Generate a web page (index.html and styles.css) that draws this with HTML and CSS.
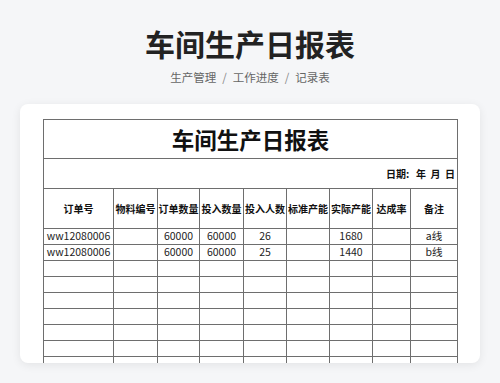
FILE: index.html
```html
<!DOCTYPE html>
<html lang="zh">
<head>
<meta charset="utf-8">
<link rel="stylesheet" href="styles.css">
</head>
<body>
<header class="page-head">
  <h1 class="page-title">车间生产日报表</h1>
  <nav class="crumbs"><span>生产管理</span><span class="sep">/</span><span>工作进度</span><span class="sep">/</span><span>记录表</span></nav>
</header>
<main class="card">
  <table class="sheet">
    <colgroup>
      <col class="c1"><col class="c2"><col class="c3"><col class="c4"><col class="c5"><col class="c6"><col class="c7"><col class="c8"><col class="c9">
    </colgroup>
    <tr class="r-title"><td colspan="9">车间生产日报表</td></tr>
    <tr class="r-date"><td colspan="9">日期:&nbsp;&nbsp;&nbsp;年&nbsp;&nbsp;月&nbsp;&nbsp;日</td></tr>
    <tr class="r-head"><th>订单号</th><th>物料编号</th><th>订单数量</th><th>投入数量</th><th>投入人数</th><th>标准产能</th><th>实际产能</th><th>达成率</th><th>备注</th></tr>
    <tr class="r-data"><td>ww12080006</td><td></td><td>60000</td><td>60000</td><td>26</td><td></td><td>1680</td><td></td><td>a线</td></tr>
    <tr class="r-data"><td>ww12080006</td><td></td><td>60000</td><td>60000</td><td>25</td><td></td><td>1440</td><td></td><td>b线</td></tr>
    <tr class="r-data"><td></td><td></td><td></td><td></td><td></td><td></td><td></td><td></td><td></td></tr>
    <tr class="r-data"><td></td><td></td><td></td><td></td><td></td><td></td><td></td><td></td><td></td></tr>
    <tr class="r-data"><td></td><td></td><td></td><td></td><td></td><td></td><td></td><td></td><td></td></tr>
    <tr class="r-data"><td></td><td></td><td></td><td></td><td></td><td></td><td></td><td></td><td></td></tr>
    <tr class="r-data"><td></td><td></td><td></td><td></td><td></td><td></td><td></td><td></td><td></td></tr>
    <tr class="r-data"><td></td><td></td><td></td><td></td><td></td><td></td><td></td><td></td><td></td></tr>
    <tr class="r-data"><td></td><td></td><td></td><td></td><td></td><td></td><td></td><td></td><td></td></tr>
    <tr class="r-data"><td></td><td></td><td></td><td></td><td></td><td></td><td></td><td></td><td></td></tr>
  </table>
</main>
</body>
</html>
```
FILE: styles.css
```css
html, body {
  margin: 0;
  padding: 0;
}
body {
  width: 500px;
  height: 383px;
  overflow: hidden;
  background: #f5f6f8;
  font-family: "Noto Sans CJK SC", "Noto Sans", sans-serif;
  color: #222;
}
.page-head {
  display: flex;
  flex-direction: column;
  align-items: center;
  padding-top: 25px;
}
.page-title {
  margin: 0;
  font-size: 30px;
  line-height: 36px;
  font-weight: 700;
  color: #222;
}
.crumbs {
  margin-top: 8px;
  display: flex;
  gap: 6px;
  font-size: 11.5px;
  line-height: 16px;
  color: #666;
}
.crumbs .sep {
  color: #888;
}
.card {
  display: block;
  margin: 19px 20px 0;
  height: 259px;
  box-sizing: border-box;
  padding: 15px 23px 0;
  background: #fff;
  border-radius: 8px;
  box-shadow: 0 2px 10px rgba(0, 0, 0, 0.08);
  overflow: hidden;
}
.sheet {
  width: 414px;
  table-layout: fixed;
  border-collapse: collapse;
  color: #111;
}
.sheet td, .sheet th {
  border: 1px solid #6e6e6e;
  padding: 0;
  text-align: center;
  vertical-align: middle;
  white-space: nowrap;
  overflow: hidden;
}
.c1 { width: 70px; }
.c2 { width: 44px; }
.c3 { width: 42px; }
.c4 { width: 44px; }
.c5 { width: 43px; }
.c6 { width: 43px; }
.c7 { width: 43px; }
.c8 { width: 38px; }
.c9 { width: 47px; }
.r-title td {
  height: 38px;
  font-size: 22.5px;
  font-weight: 700;
  line-height: 1;
}
.r-date td {
  height: 29px;
  text-align: right;
  padding-right: 2px;
  font-size: 10px;
  font-weight: 700;
  line-height: 1;
}
.r-head th {
  height: 39px;
  font-size: 10px;
  font-weight: 700;
  line-height: 1;
}
.r-data td {
  height: 15px;
  font-size: 10.5px;
  line-height: 1;
  color: #222;
}
```
